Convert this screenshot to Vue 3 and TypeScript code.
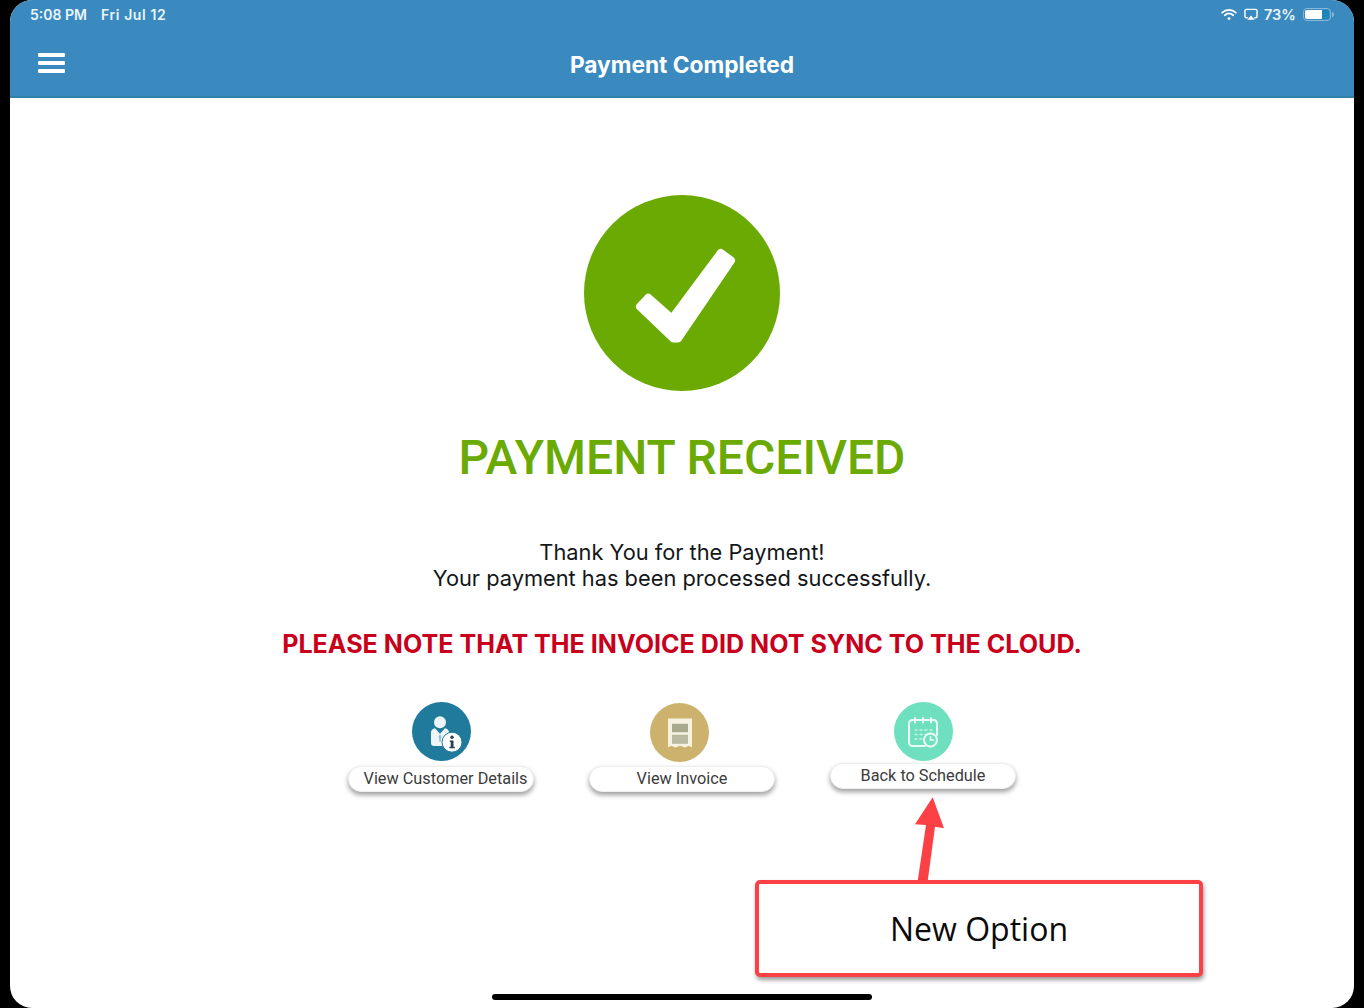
<script setup lang="ts">
const actions = [
  { label: 'View Customer Details', kind: 'customer' },
  { label: 'View Invoice', kind: 'invoice' },
  { label: 'Back to Schedule', kind: 'schedule' },
]
</script>

<template>
  <div class="screen">
    <div class="device">
      <header class="header">
        <div class="status">
          <div class="status-left"><span>5:08 PM</span><span class="date">Fri Jul 12</span></div>
          <div class="status-right">
            <svg width="16" height="13" viewBox="0 0 17 13" fill="none" stroke="#fff" stroke-linecap="round">
              <path d="M1.2 4.6C5.4.7 11.6.7 15.8 4.6" stroke-width="1.9" />
              <path d="M4 7.3c2.7-2.4 6.3-2.4 9 0" stroke-width="1.9" />
              <circle cx="8.5" cy="10.8" r="1.5" fill="#fff" stroke="none" />
            </svg>
            <svg width="14" height="13" viewBox="0 0 15 13" fill="none" stroke="#fff">
              <path d="M4 10H2.6A1.6 1.6 0 0 1 1 8.4V2.6A1.6 1.6 0 0 1 2.6 1h9.8A1.6 1.6 0 0 1 14 2.6v5.8a1.6 1.6 0 0 1-1.6 1.6H11" stroke-width="1.5" />
              <path d="M7.5 7.5 11.5 12h-8z" fill="#fff" stroke="none" />
            </svg>
            <span class="pct">73%</span>
            <div class="battery"><i></i></div>
          </div>
        </div>
        <div class="nav">
          <div class="burger"><i></i><i></i><i></i></div>
          <h1>Payment Completed</h1>
        </div>
      </header>

      <main class="content">
        <svg class="tick" width="198" height="198" viewBox="0 0 198 198">
          <circle cx="99" cy="99" r="98" fill="#6aaa03" />
          <path d="M65.300 103.800 89 124.700 137.800 59 148 66.500 95 144.500 90.500 144.500 57 112.500z" fill="#fff" stroke="#fff" stroke-width="8" stroke-linejoin="round" />
        </svg>
        <h2>PAYMENT RECEIVED</h2>
        <p class="thanks">Thank You for the Payment!<br />Your payment has been processed successfully.</p>
        <p class="warning">PLEASE NOTE THAT THE INVOICE DID NOT SYNC TO THE CLOUD.</p>

        <div class="actions">
          <div v-for="a in actions" :key="a.kind" class="action" :class="a.kind">
            <div class="disc">
              <svg v-if="a.kind === 'customer'" width="38" height="38" viewBox="0 0 38 38" class="over">
                <circle cx="18" cy="9.200" r="6" fill="#eef5f8" />
                <path d="M9 19.500c0-2.200 1.500-3.600 4-4.200l5 5.500 5-5.500c2.500.6 4 2 4 4.200V33H12c-2 0-3-1.200-3-3z" fill="#eef5f8" />
                <path d="M18 21.500l1.300 1.600-.8 6h-1l-.8-6z" fill="#8fbdd0" />
                <circle cx="30" cy="29.200" r="10" fill="#fff" stroke="#1f7a9c" stroke-width="1" />
                <circle cx="30" cy="24.300" r="1.700" fill="#24424f" />
                <path d="M27.800 27.500h3.700v6.300h1.300v1.400h-5.400v-1.400h1.300v-4.900h-.9z" fill="#24424f" />
              </svg>
              <svg v-else-if="a.kind === 'invoice'" width="38" height="38" viewBox="0 0 38 38">
                <path d="M7 4.500h24v29l-3-1.800-4 1.800-5-1.800-4.500 1.800-4.500-1.800-3 1.800z" fill="#f6f2e2" />
                <rect x="11" y="9.800" width="16" height="8.400" fill="#a9a98f" />
                <rect x="11" y="20.800" width="16" height="9" fill="#b9b99e" />
              </svg>
              <svg v-else width="38" height="38" viewBox="0 0 38 38" fill="none" stroke="#e9fbf4" stroke-width="2" stroke-linecap="round">
                <path d="M21 33H8.500A3.500 3.500 0 0 1 5 29.500V10.500A3.500 3.500 0 0 1 8.500 7h21A3.500 3.500 0 0 1 33 10.500V22" />
                <path d="M11 5v4.500M19 5v4.500M27 5v4.500" />
                <path d="M11 17h2M16 17h2M21 17h2M26 17h2M11 21.500h2M16 21.500h2M21 21.500h2M11 26h2M16 26h2" stroke-width="1.400" opacity=".7" />
                <circle cx="26.500" cy="27" r="6.500" fill="#6fe0bf" />
                <path d="M26.500 23.800V27h3" stroke-width="1.700" />
              </svg>
            </div>
            <button class="pill">{{ a.label }}</button>
          </div>
        </div>

        <svg class="arrow" width="40" height="90" viewBox="0 0 40 90">
          <path d="M22.700 2.300 34 33.300 25 31.700 17.700 86H7.700L16 30 5 29.300z" fill="#fb4145" />
        </svg>
        <div class="callout">New Option</div>
        <div class="home-bar"></div>
      </main>
    </div>
  </div>
</template>

<style>
html, body { margin: 0; background: #000; }
</style>

<style scoped>
.screen {
  width: 1364px;
  height: 1008px;
  background: #000;
  overflow: hidden;
  font-family: Inter, "Liberation Sans", sans-serif;
}
.device {
  width: 1344px;
  height: 1008px;
  margin: 0 10px;
  background: #fff;
  border-radius: 22px;
  overflow: hidden;
  display: flex;
  flex-direction: column;
}
.header {
  height: 98px;
  flex: none;
  box-sizing: border-box;
  background: #3a8abf;
  border-bottom: 2px solid #2f83a9;
  color: #fff;
}
.status {
  display: flex;
  justify-content: space-between;
  padding: 6px 19px 0 20px;
  height: 17px;
  font-size: 14px;
  line-height: 17px;
  font-weight: 600;
  color: #eaf5fb;
}
.status-left { display: flex; gap: 14px; }
.date { letter-spacing: .6px; }
.status-right { display: flex; align-items: center; gap: 7px; }
.pct { width: 32px; margin-left: -1px; font-size: 14.500px; white-space: nowrap; }
.battery {
  width: 28px;
  height: 13px;
  box-sizing: border-box;
  border: 1px solid #86b8d8;
  border-radius: 4px;
  padding: 1px;
  margin-right: 4px;
  position: relative;
  background: linear-gradient(90deg, transparent 70%, #1b87b8 70%) content-box;
}
.battery::after {
  content: "";
  position: absolute;
  right: -4px;
  top: 3px;
  width: 2px;
  height: 5px;
  background: #86b8d8;
  border-radius: 0 2px 2px 0;
}
.battery i { display: block; height: 100%; width: 70%; background: #fff; border-radius: 2px 0 0 2px; }
.nav {
  display: flex;
  align-items: center;
  height: 46px;
  margin-top: 19px;
  padding-left: 28px;
  position: relative;
}
.burger { width: 27px; display: flex; flex-direction: column; gap: 4px; margin-top: -4px; }
.burger i { display: block; height: 4px; background: #fff; border-radius: 1px; }
.nav h1 {
  position: absolute;
  left: 0;
  right: 0;
  top: 0;
  margin: 0;
  text-align: center;
  font-size: 22.700px;
  line-height: 46px;
  font-weight: 700;
}
.content {
  flex: 1;
  position: relative;
  display: flex;
  flex-direction: column;
  align-items: center;
  padding-top: 96px;
}
.tick { flex: none; }
h2 {
  margin: 36px 0 0;
  font-family: Roboto, "Liberation Sans", sans-serif;
  font-size: 48px;
  line-height: 60px;
  font-weight: 500;
  color: #6aaa03;
}
.thanks {
  margin: 51px 0 0;
  font-size: 21.800px;
  line-height: 26px;
  text-align: center;
  color: #14171a;
}
.warning {
  margin: 38px 0 0;
  font-size: 25.100px;
  line-height: 30px;
  font-weight: 700;
  color: #c8001c;
  white-space: nowrap;
}
.actions {
  display: flex;
  gap: 55px;
  margin-top: 43px;
}
.action { width: 186px; display: flex; flex-direction: column; align-items: center; gap: 5px; }
.action.schedule { gap: 2px; }
.disc {
  width: 59px;
  height: 59px;
  border-radius: 50%;
  display: flex;
  align-items: center;
  justify-content: center;
}
.over { overflow: visible; }
.customer .disc { background: #1f7a9c; }
.invoice .disc { background: #ccb26c; margin-left: -5px; }
.invoice { padding-top: 1px; }
.invoice .pill { margin-top: -1px; }
.schedule .disc { background: #6fe0bf; }
.pill {
  width: 186px;
  height: 26px;
  padding: 0;
  border: 1px solid #eee;
  border-radius: 13px;
  background: #fff;
  box-shadow: 0 3px 5px rgba(0, 0, 0, .38);
  font: 400 16.300px/24px Roboto, "Liberation Sans", sans-serif;
  color: #3b3b3b;
}
.customer .pill { padding-left: 9px; }
.arrow { position: absolute; left: 900px; top: 697px; }
.callout {
  position: absolute;
  left: 745px;
  top: 782px;
  width: 448px;
  height: 97px;
  box-sizing: border-box;
  border: 4px solid #fb4145;
  border-radius: 5px;
  background: #fff;
  box-shadow: 1px 3px 4px rgba(0, 0, 0, .4);
  display: flex;
  align-items: center;
  justify-content: center;
  font: 400 32px/40px "Open Sans", "Noto Sans", sans-serif;
  color: #0b0b0b;
}
.home-bar {
  position: absolute;
  left: 482px;
  top: 896px;
  width: 380px;
  height: 6px;
  background: #000;
  border-radius: 3px;
}
</style>
